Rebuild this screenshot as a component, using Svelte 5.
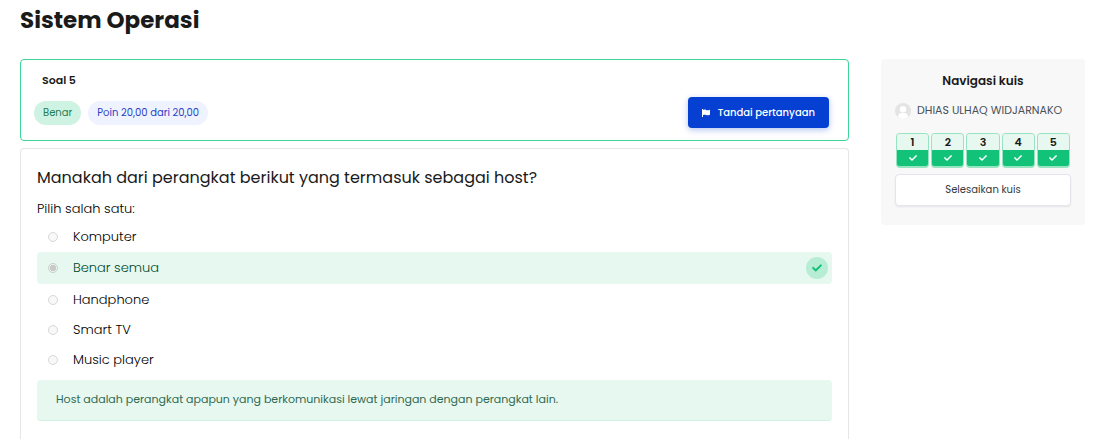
<script>
  const course = 'Sistem Operasi';
  const answers = ['Komputer', 'Benar semua', 'Handphone', 'Smart TV', 'Music player'];
  const chosen = 1;
  const questions = [1, 2, 3, 4, 5];
</script>

{#snippet check()}
  <svg class="check" viewBox="0 0 512 512" aria-hidden="true">
    <path
      fill="currentColor"
      d="M173.9 439.4 7.5 273c-10-10-10-26.200 0-36.200l36.200-36.200c10-10 26.200-10 36.200 0L192 312.700 432.100 72.600c10-10 26.200-10 36.200 0l36.200 36.200c10 10 10 26.200 0 36.200L210.100 439.400c-10 10-26.200 10-36.200 0z"
    />
  </svg>
{/snippet}

<div class="page">
  <h1>{course}</h1>
  <div class="layout">
    <main>
      <section class="info">
        <h2>Soal 5</h2>
        <div class="info-row">
          <span class="badge state">Benar</span>
          <span class="badge grade">Poin 20,00 dari 20,00</span>
          <button type="button" class="flag">
            <svg viewBox="0 0 8 8" aria-hidden="true">
              <path fill="currentColor" d="M0 0h1v8H0zM1 1c1-.6 2-.6 3 0s2 .4 4-.2v5c-2 .7-3 .7-4 .2s-2-.5-3 0z" />
            </svg>
            Tandai pertanyaan
          </button>
        </div>
      </section>

      <section class="question">
        <p class="prompt">Manakah dari perangkat berikut yang termasuk sebagai host?</p>
        <fieldset>
          <legend>Pilih salah satu:</legend>
          <div class="answers">
            {#each answers as answer, i}
              <div class="answer" class:correct={i === chosen}>
                <input type="radio" name="answer" id="answer-{i}" checked={i === chosen} disabled />
                <label for="answer-{i}">{answer}</label>
                {#if i === chosen}
                  <span class="mark">{@render check()}</span>
                {/if}
              </div>
            {/each}
          </div>
        </fieldset>
        <div class="feedback">
          Host adalah perangkat apapun yang berkomunikasi lewat jaringan dengan perangkat lain.
        </div>
      </section>
    </main>

    <aside>
      <h3>Navigasi kuis</h3>
      <div class="user">
        <svg class="avatar" viewBox="0 0 16 16" aria-hidden="true">
          <circle cx="8" cy="8" r="8" fill="#e4e4e4" />
          <circle cx="8" cy="6.300" r="3.200" fill="#fff" />
          <path fill="#fff" d="M2.800 14.100c.2-2.700 1.500-3.800 3.200-4.200h4c1.700.4 3 1.500 3.200 4.200A8 8 0 0 1 8 16a8 8 0 0 1-5.200-1.900z" />
        </svg>
        <span>DHIAS ULHAQ WIDJARNAKO</span>
      </div>
      <nav>
        {#each questions as n}
          <a href="#q{n}">
            <span class="num">{n}</span>
            <span class="tick">{@render check()}</span>
          </a>
        {/each}
      </nav>
      <button type="button" class="finish">Selesaikan kuis</button>
    </aside>
  </div>
</div>

<style>
  :global(body) {
    margin: 0;
    background: #fff;
  }
  .page,
  .page * {
    box-sizing: border-box;
  }
  .page {
    min-height: 100vh;
    padding: 4px 9px 0 20px;
    display: flex;
    flex-direction: column;
    font-family: Poppins, Inter, "Open Sans", sans-serif;
    font-size: 13px;
    line-height: 20px;
    color: #1a1a1a;
  }
  button {
    font-family: inherit;
  }
  h1,
  h2,
  h3,
  p {
    margin: 0;
  }
  h1 {
    font-size: 23px;
    line-height: 32px;
    font-weight: 700;
    margin-bottom: 23px;
  }
  .layout {
    flex: 1;
    display: grid;
    grid-template-columns: minmax(0, 1fr) 204px;
    gap: 32px;
  }
  main {
    display: flex;
    flex-direction: column;
    gap: 7px;
  }
  .info {
    border: 1px solid #3dd598;
    border-radius: 4px;
    padding: 10px 19px 12px 13px;
  }
  h2 {
    font-size: 11px;
    line-height: 20px;
    font-weight: 600;
    padding-left: 8px;
    margin-bottom: 7px;
  }
  .info-row {
    display: flex;
    align-items: center;
    gap: 7px;
  }
  .badge {
    border-radius: 12px;
    padding: 0 9px;
    font-size: 10px;
    line-height: 24px;
  }
  .state {
    background: #cff3e3;
    color: #1f7f53;
  }
  .grade {
    background: #eff3ff;
    color: #2b3fc4;
  }
  .flag {
    margin-left: auto;
    height: 31px;
    padding: 0 14px;
    border: 0;
    border-radius: 4px;
    background: #0540d2;
    color: #fff;
    font-size: 10px;
    font-weight: 500;
    display: flex;
    align-items: center;
    gap: 8px;
    box-shadow: 0 2px 6px rgba(5, 64, 210, 0.3);
  }
  .flag svg {
    width: 8px;
    height: 8px;
  }
  .question {
    flex: 1;
    border: 1px solid #e6e6e6;
    border-bottom: 0;
    border-radius: 4px 4px 0 0;
    padding: 17px 16px;
  }
  .prompt {
    font-size: 16px;
    line-height: 24px;
    font-weight: 400;
    margin-bottom: 8px;
  }
  fieldset {
    border: 0;
    margin: 0;
    padding: 0;
    min-width: 0;
    font-weight: 300;
    color: #000;
  }
  legend {
    padding: 0;
    line-height: 22px;
    margin-bottom: 2px;
  }
  .answers {
    display: flex;
    flex-direction: column;
    gap: 1px;
  }
  .answer {
    display: flex;
    align-items: center;
    height: 29px;
    padding: 0 4px 0 11px;
  }
  .correct {
    height: 32px;
    border-radius: 4px;
    background: #e7f8f0;
    color: #004a2b;
  }
  .answer input {
    appearance: none;
    width: 10px;
    height: 10px;
    margin: 0 15px 0 0;
    border: 1px solid #d8d8d8;
    border-radius: 50%;
    background: #f8f8f8;
  }
  .answer input:checked {
    background: radial-gradient(circle, #c6cac8 0 3px, #f0f5f3 3px);
    border-color: #c9cfcc;
  }
  .mark {
    width: 22px;
    height: 22px;
    margin-left: auto;
    border-radius: 50%;
    background: #b7ecd5;
    color: #12c278;
    display: grid;
    place-items: center;
  }
  .check {
    display: block;
    width: 8px;
    height: 8px;
  }
  .mark .check {
    width: 10px;
    height: 10px;
  }
  .feedback {
    margin-top: 6px;
    padding: 9px 19px 11px;
    border-bottom: 1px solid #d0f2e3;
    border-radius: 4px;
    background: #e7f8f0;
    color: #306951;
    font-size: 11px;
    line-height: 20px;
  }
  aside {
    align-self: start;
    padding: 12px 14px 19px;
    border-radius: 4px;
    background: #f8f8f8;
  }
  h3 {
    font-size: 12px;
    line-height: 20px;
    font-weight: 600;
    text-align: center;
    margin-bottom: 9px;
  }
  .user {
    display: flex;
    align-items: center;
    gap: 6px;
    margin-bottom: 12px;
    font-size: 11px;
    line-height: 21px;
    color: #495057;
    white-space: nowrap;
  }
  .avatar {
    flex: none;
    width: 16px;
    height: 16px;
  }
  nav {
    display: grid;
    grid-template-columns: repeat(5, 1fr);
    gap: 2px;
    padding: 0 1px;
    margin-bottom: 6px;
  }
  nav a {
    border: 1px solid #97e4c2;
    border-bottom-width: 2px;
    border-radius: 4px;
    overflow: hidden;
    color: #1a1a1a;
    text-decoration: none;
    text-align: center;
  }
  .num {
    display: block;
    background: #e7f8f0;
    font-size: 11px;
    line-height: 16px;
    font-weight: 600;
  }
  .tick {
    display: grid;
    place-items: center;
    height: 16px;
    background: #12c278;
    color: #fff;
  }
  .finish {
    display: block;
    width: 100%;
    height: 32px;
    padding: 0;
    border: 1px solid #e4e6ef;
    border-radius: 4px;
    background: #fff;
    color: #343a40;
    font-size: 10px;
    box-shadow: 0 1px 2px rgba(0, 0, 0, 0.08);
  }
</style>
